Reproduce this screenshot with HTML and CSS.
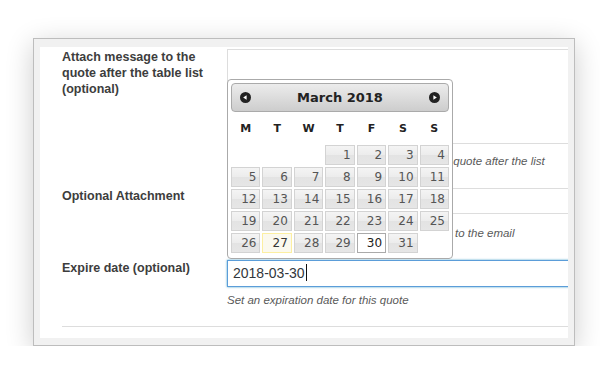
FILE: index.html
```
<!DOCTYPE html>
<html lang="en">
<head>
  <meta charset="UTF-8" />
  <meta name="viewport" content="width=device-width, initial-scale=1.0"/>
  <title>Quote settings</title>
  <link rel="stylesheet" href="styles.css">
</head>
<body>
  <div class="window">
    <div class="page">
      <div class="form">
        <div class="row row-message">
          <div class="label">Attach message to the quote after the table list (optional)</div>
          <div class="field">
            <div class="textarea"></div>
            <p class="description">Write a message that will be attached to the quote after the list</p>
          </div>
        </div>

        <div class="row row-attachment">
          <div class="label">Optional Attachment</div>
          <div class="field">
            <div class="input"></div>
            <p class="description">Choose an optional file that will be attached to the email</p>
          </div>
        </div>

        <div class="row row-expire">
          <div class="label">Expire date (optional)</div>
          <div class="field">
            <div class="input focused">2018-03-30<span class="caret"></span></div>
            <p class="description">Set an expiration date for this quote</p>
          </div>
        </div>
      </div>

      <div class="datepicker">
        <div class="dp-header">
          <svg class="dp-arrow" width="11" height="11" viewBox="0 0 11 11"><circle cx="5.5" cy="5.5" r="5.5" fill="#222"/><polygon points="3.2,5.5 6.6,3.3 6.6,7.7" fill="#fff"/></svg>
          <span class="dp-title">March 2018</span>
          <svg class="dp-arrow" width="11" height="11" viewBox="0 0 11 11"><circle cx="5.5" cy="5.5" r="5.5" fill="#222"/><polygon points="7.8,5.5 4.4,3.3 4.4,7.7" fill="#fff"/></svg>
        </div>
        <div class="dp-days">
          <span>M</span><span>T</span><span>W</span><span>T</span><span>F</span><span>S</span><span>S</span>
        </div>
        <div class="dp-grid">
          <span class="empty"></span><span class="empty"></span><span class="empty"></span>
          <span>1</span><span>2</span><span>3</span><span>4</span>
          <span>5</span><span>6</span><span>7</span><span>8</span><span>9</span><span>10</span><span>11</span>
          <span>12</span><span>13</span><span>14</span><span>15</span><span>16</span><span>17</span><span>18</span>
          <span>19</span><span>20</span><span>21</span><span>22</span><span>23</span><span>24</span><span>25</span>
          <span>26</span><span class="today">27</span><span>28</span><span>29</span><span class="active">30</span><span>31</span>
        </div>
      </div>
    </div>
  </div>
</body>
</html>
```

FILE: styles.css
```
body {
  margin: 0;
  background: #fff;
  font-family: "Liberation Sans", Arial, sans-serif;
}
.window {
  margin: 38px 0 0 33px;
  width: 528px;
  height: 291px;
  padding: 8px 6px 7px 6px;
  border: 1px solid #bdbdbd;
  background: #f1f1f1;
  box-shadow: 0 6px 26px rgba(0,0,0,0.2);
}
.page {
  position: relative;
  height: 291px;
  overflow: hidden;
  background: #fff;
  padding-left: 22px;
}
.form {
  border-bottom: 1px solid #ddd;
  padding-bottom: 18px;
}
.row { display: flex; }
.row-message { margin-top: 2px; }
.row-attachment, .row-expire { margin-top: 19px; }
.label {
  flex: none;
  width: 155px;
  padding-right: 10px;
  font-size: 12.5px;
  line-height: 16px;
  font-weight: bold;
  color: #3d3d3d;
}
.field { flex: 1; min-width: 0; }
.textarea, .input {
  box-sizing: border-box;
  width: calc(100% + 20px);
  border: 1px solid #ddd;
  background: #fff;
}
.textarea { height: 95px; }
.input {
  height: 26px;
  padding-left: 5px;
  font-size: 14px;
  line-height: 25px;
  color: #32373c;
}
.input.focused {
  height: 27px;
  border-color: #5b9dd9;
  box-shadow: 0 0 2px rgba(30,140,190,0.8);
}
.caret {
  display: inline-block;
  width: 1px;
  height: 17px;
  margin-left: 1px;
  background: #111;
  vertical-align: -3px;
}
.description {
  margin: 0;
  font-size: 11.5px;
  line-height: 16px;
  font-style: italic;
  color: #5a5a5a;
  white-space: nowrap;
}
.row-message .description { margin-top: 9px; }
.row-attachment .description { margin-top: 11px; padding-left: 3px; }
.row-expire .description { margin-top: 5px; }

/* datepicker popup */
.datepicker {
  position: absolute;
  left: 187px;
  top: 32px;
  box-sizing: border-box;
  width: 226px;
  padding: 3px 3px 5px;
  border: 1px solid #aaa;
  border-radius: 4px;
  background: #fff;
  font-family: "DejaVu Sans", Verdana, sans-serif;
}
.dp-header {
  box-sizing: border-box;
  height: 29px;
  display: flex;
  align-items: center;
  justify-content: space-between;
  padding: 0 8px;
  border: 1px solid #aaa;
  border-radius: 4px;
  background: linear-gradient(#ececec, #cdcdcd);
}
.dp-title {
  font-size: 13px;
  font-weight: bold;
  color: #222;
}
.dp-arrow { display: block; }
.dp-days, .dp-grid {
  display: grid;
  grid-template-columns: repeat(7, 1fr);
  column-gap: 2px;
}
.dp-days {
  height: 33px;
  align-items: center;
  text-align: center;
  font-size: 11px;
  font-weight: bold;
  color: #222;
}
.dp-grid { row-gap: 2px; }
.dp-grid span {
  box-sizing: border-box;
  height: 20px;
  padding-right: 3px;
  border: 1px solid #d3d3d3;
  background: linear-gradient(#f4f4f4 0%, #ececec 50%, #e3e3e3 51%, #e6e6e6 100%);
  text-align: right;
  font-size: 12px;
  line-height: 18px;
  color: #555;
}
.dp-grid span.empty { border-color: transparent; background: none; }
.dp-grid span.today {
  border-color: #fcefa1;
  background: #fbf9ee;
  color: #363636;
}
.dp-grid span.active {
  border-color: #aaa;
  background: #fff;
  color: #212121;
}
```
